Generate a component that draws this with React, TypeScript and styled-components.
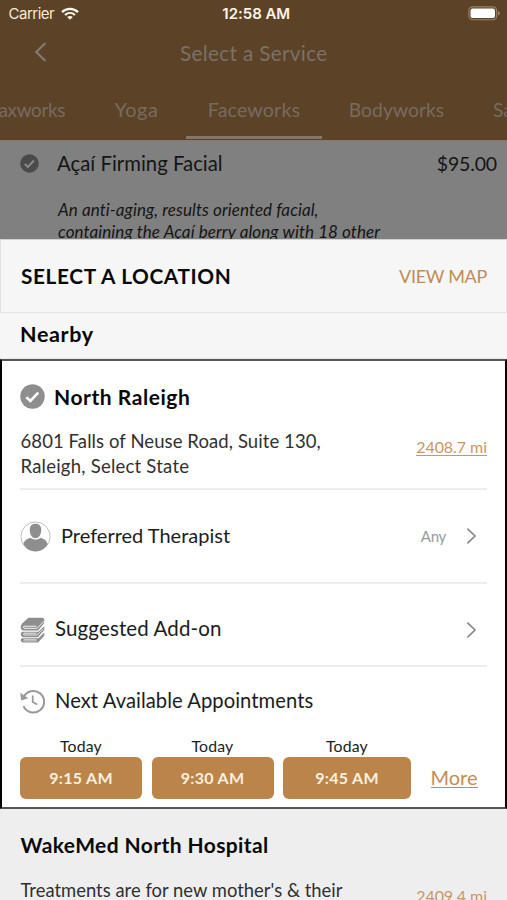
import React from 'react';
import styled, { createGlobalStyle } from 'styled-components';

const GlobalStyle = createGlobalStyle`
  * { box-sizing: border-box; }
  html, body { margin: 0; padding: 0; }
  body { width: 507px; height: 900px; overflow: hidden; background: #808080; }
`;

const gold = '#ba844a';
const gray = '#8e8e8e';

const Screen = styled.div`
  width: 507px;
  height: 900px;
  overflow: hidden;
  display: flex;
  flex-direction: column;
  font-family: Lato, "Open Sans", sans-serif;
  color: #1c1c1c;
  white-space: nowrap;
`;

const Label = styled.span<{ $size?: number; $track?: number; $bold?: boolean; $color?: string }>`
  font-size: ${p => p.$size ?? 20}px;
  font-weight: ${p => (p.$bold ? 700 : 400)};
  letter-spacing: ${p => p.$track ?? 0}px;
  color: ${p => p.$color ?? 'inherit'};
`;

const Header = styled.header`
  flex: none;
  height: 140px;
  background: #5c4226;
`;

const StatusBar = styled.div`
  height: 27px;
  padding: 0 7px 0 8.5px;
  display: grid;
  grid-template-columns: 1fr auto 1fr;
  align-items: center;
  font: 400 15px/27px Inter, sans-serif;
  color: #f6ead9;
`;

const Carrier = styled.div`
  display: flex;
  align-items: center;
  gap: 7px;
  letter-spacing: -0.5px;
`;

const Clock = styled.div`
  font-weight: 600;
  letter-spacing: -0.03px;
  padding-left: 4px;
  color: #fff6e8;
`;

const BatterySlot = styled.div`
  display: flex;
  justify-content: flex-end;
`;

const NavBar = styled.div`
  height: 50px;
  display: grid;
  grid-template-columns: 180px 1fr;
  align-items: center;
  line-height: 49px;
  color: #7b706a;
`;

const BackSlot = styled.div`
  display: flex;
  padding-left: 33px;
`;

const Tabs = styled.nav`
  height: 63px;
  display: flex;
  line-height: 65px;
  color: #776b60;
  overflow: hidden;
`;

const Tab = styled.div<{ $width: number; $active?: boolean; $align?: string }>`
  flex: none;
  width: ${p => p.$width}px;
  height: 62px;
  display: flex;
  padding: 0 ${p => (p.$align ? 22 : 0)}px;
  justify-content: ${p => p.$align ?? 'center'};
  border-bottom: 3px solid ${p => (p.$active ? '#80766d' : 'transparent')};
`;

const ServiceItem = styled.section`
  flex: none;
  height: 99px;
  overflow: hidden;
  background: #808080;
  border-top: 1px solid #86796c;
  color: #151515;
`;

const ServiceTitle = styled.div`
  height: 44px;
  padding: 0 10px 0 20px;
  display: grid;
  grid-template-columns: 37px 1fr auto;
  align-items: center;
  line-height: 43px;
`;

const Description = styled.p`
  margin: 14px 0 0 58px;
  font-size: 17px;
  font-style: italic;
  line-height: 21.5px;
  letter-spacing: 0.08px;
`;

const SheetHeader = styled.div`
  flex: none;
  height: 74px;
  padding: 0 19px 1px 20px;
  display: flex;
  align-items: center;
  justify-content: space-between;
  background: #f6f6f6;
  border: 1px solid #e2e2e2;
  border-top-color: #d0d0d0;
  color: #090909;
`;

const SectionTitle = styled.div`
  flex: none;
  height: 46px;
  padding-left: 20px;
  line-height: 43px;
  background: #f6f6f6;
  border-bottom: 1px solid #e8e8e8;
  color: #050505;
`;

const Card = styled.section`
  flex: none;
  height: 450px;
  padding: 0 18px;
  background: #fff;
  border: 2px solid #000;
  border-top-color: #555;
  border-bottom-color: #555;
`;

const Row = styled.div<{ $height: number; $top?: number; $bottom?: number; $rule?: boolean }>`
  height: ${p => p.$height}px;
  padding-top: ${p => p.$top ?? 0}px;
  display: flex;
  align-items: center;
  gap: 10px;
  border-bottom: ${p => (p.$rule ? '2px solid #ededed' : 'none')};

  > ${Label} {
    padding-bottom: 3px;
  }
`;

const CardTitle = styled.div`
  height: 68px;
  padding-top: 2px;
  display: flex;
  align-items: center;
  gap: 9px;
  color: #080808;
`;

const AddressRow = styled.div`
  height: 61px;
  display: flex;
  justify-content: space-between;
  border-bottom: 2px solid #ededed;
  line-height: 25px;
`;

const Address = styled.div`
  padding-left: 0.5px;
  display: flex;
  flex-direction: column;
  color: #303030;
`;

const Distance = styled.a`
  height: 19px;
  margin-top: 8px;
  font-size: 16px;
  line-height: 19px;
  letter-spacing: -0.05px;
  color: #cb9661;
  border-bottom: 1px solid #cb9661;
`;

const Trailing = styled.div`
  margin-left: auto;
  padding-right: 10px;
  display: flex;
  align-items: center;
  gap: 20px;
`;

const Slots = styled.div`
  display: grid;
  grid-template-columns: 122px 122px 128px 1fr;
  column-gap: 9.5px;
`;

const Slot = styled.div`
  display: flex;
  flex-direction: column;
  align-items: center;
`;

const Day = styled.span`
  height: 22px;
  font-size: 15.8px;
  line-height: 21px;
  letter-spacing: 0.18px;
`;

const TimeButton = styled.button`
  width: 100%;
  height: 42px;
  margin: 0;
  padding: 0 0 2px;
  border: 0;
  border-radius: 6px;
  background: ${gold};
  color: #fdf0df;
  font: 700 16px Lato, sans-serif;
  letter-spacing: 0.3px;
`;

const More = styled.a`
  align-self: start;
  justify-self: start;
  height: 23px;
  margin: 30px 0 0 10px;
  font-size: 20px;
  line-height: 24px;
  color: #c18d57;
  border-bottom: 1px solid #c18d57;
`;

const NextCard = styled.section`
  flex: none;
  height: 91px;
  padding: 0 20px 0 20.5px;
  overflow: hidden;
  background: #eee;
`;

const NextName = styled.div`
  height: 70px;
  line-height: 72px;
  color: #0a0a0a;
`;

const NextDetails = styled.div`
  display: flex;
  justify-content: space-between;
  line-height: 23px;
  color: #303030;
`;

const NextDistance = styled(Distance)`
  margin-top: 7px;
`;

const Wifi = () => (
  <svg width="18" height="14" viewBox="0 0 18 14" fill="none" stroke="#fff8ec">
    <path d="M1 5.1C5.4 0.8 12.6 0.8 17 5.1" strokeWidth="2.3" />
    <path d="M4 8C6.9 5.3 11.1 5.3 14 8" strokeWidth="2.2" />
    <path d="M9 12.8L6.2 10C7.8 8.7 10.2 8.7 11.8 10Z" fill="#fff8ec" stroke="none" />
  </svg>
);

const Battery = () => (
  <svg width="32" height="15" viewBox="0 0 32 15">
    <rect x="0.9" y="0.9" width="27.8" height="12.8" rx="3.8" fill="none" stroke="#9b8368" strokeWidth="1.1" />
    <rect x="2.5" y="2.5" width="24.5" height="9.6" rx="2.2" fill="#fff" />
    <path d="M30 5.2Q31.8 5.8 31.8 7.3T30 9.5Z" fill="#9b8368" />
  </svg>
);

const BackArrow = () => (
  <svg width="14" height="20" viewBox="0 0 14 20" fill="none" stroke="#817870" strokeWidth="2.3">
    <path d="M12.4 1L3.3 10L12.4 19" />
  </svg>
);

const Chevron = () => (
  <svg width="11" height="18" viewBox="0 0 11 18" fill="none" stroke="#858585" strokeWidth="1.6">
    <path d="M1.4 1.6L9 9L1.4 16.4" />
  </svg>
);

const CheckCircle = ({ size, fill, mark }: { size: number; fill: string; mark: string }) => (
  <svg width={size} height={size} viewBox="0 0 25 25">
    <circle cx="12.5" cy="12.5" r="12.2" fill={fill} />
    <path d="M6.3 13.2L10.4 17L18.3 8.6" fill="none" stroke={mark} strokeWidth="2.6" />
  </svg>
);

const Person = () => (
  <svg width="31" height="31" viewBox="0 0 31 31">
    <circle cx="15.5" cy="15.5" r="14.6" fill="#fff" stroke="#bdbdbd" strokeWidth="1" />
    <path d="M15.5 2.8C19.4 2.8 21.5 5.5 21.2 9.5C21 14 18.8 17.2 15.5 17.2S10 14 9.8 9.5C9.5 5.5 11.6 2.8 15.5 2.8Z" fill={gray} />
    <path d="M3.4 23.2C4.2 19.4 7 17.8 10.5 16.8C13 19.2 18 19.2 20.5 16.8C24 17.8 26.8 19.4 27.6 23.2C25 27.6 20.7 30.2 15.5 30.2S6 27.6 3.4 23.2Z" fill={gray} />
  </svg>
);

const Books = () => (
  <svg width="25" height="26" viewBox="0 0 25 26">
    <path d="M8.5 0.7H22.3Q25 1.1 24.2 4.4L24.4 6L18 13.6H3.8Q0.2 13 0.8 9.4Q1.2 6.8 3.4 5.2Z" fill={gray} />
    <path d="M24.3 9.2V12.9L17.8 20.3H4Q0.3 19.6 0.9 16.4Q1.2 15.1 2.3 14.8H18.4Z" fill={gray} />
    <path d="M24.3 15.5V18.8L18 25.5H3.6Q0.3 25 0.8 22.5Q1.2 21.2 2.3 21.2H18.4Z" fill={gray} />
    <g fill="none" stroke="#fff" strokeWidth="0.9">
      <path d="M16.5 9.2H4Q2.8 10.2 4 11.3H17.2L24.4 3.9" />
      <path d="M16.5 16.2H4Q2.9 17.1 4 18H17.2L23.4 11.8" strokeWidth="0.8" />
      <path d="M16.5 22.6H4Q3.2 23.2 4 23.9H16.8" strokeWidth="0.6" />
    </g>
  </svg>
);

const History = () => (
  <svg width="25" height="25" viewBox="0 0 25 25" fill="none">
    <path d="M3.6 8.1A10.8 10.8 0 1 1 3.5 17.2" stroke="#999" strokeWidth="2" />
    <path d="M0.2 3.7L1.2 11.5L8.2 9.2Z" fill="#999" />
    <path d="M12.7 6.5V13L17.2 15.6" stroke="#999" strokeWidth="1.7" />
  </svg>
);

const times = ['9:15 AM', '9:30 AM', '9:45 AM'];

export default function App() {
  return (
    <Screen>
      <GlobalStyle />
      <Header>
        <StatusBar>
          <Carrier>Carrier<Wifi /></Carrier>
          <Clock>12:58 AM</Clock>
          <BatterySlot><Battery /></BatterySlot>
        </StatusBar>
        <NavBar>
          <BackSlot><BackArrow /></BackSlot>
          <Label $size={20.8} $track={0.3}>Select a Service</Label>
        </NavBar>
        <Tabs>
          <Tab $width={87} $align="flex-end"><Label $size={19} $track={-0.4}>Waxworks</Label></Tab>
          <Tab $width={99}><Label $size={20} $track={0.5}>Yoga</Label></Tab>
          <Tab $width={136} $active><Label $size={19.7} $track={0.12}>Faceworks</Label></Tab>
          <Tab $width={149}><Label $size={19.3} $track={0.05}>Bodyworks</Label></Tab>
          <Tab $width={150} $align="flex-start"><Label $size={19.3}>Saltworks</Label></Tab>
        </Tabs>
      </Header>

      <ServiceItem>
        <ServiceTitle>
          <CheckCircle size={19} fill="#4a4a4a" mark="#8b8b8b" />
          <Label $size={20.3} $track={0.03}>Açaí Firming Facial</Label>
          <Label $size={19.5} $track={-0.15}>$95.00</Label>
        </ServiceTitle>
        <Description>
          An anti-aging, results oriented facial,<br />
          containing the Açaí berry along with 18 other
        </Description>
      </ServiceItem>

      <SheetHeader>
        <Label $bold $size={20.8} $track={0.62}>SELECT A LOCATION</Label>
        <Label $size={18} $track={-0.3} $color="#c18c57">VIEW MAP</Label>
      </SheetHeader>
      <SectionTitle><Label $bold $size={21.5} $track={0.65}>Nearby</Label></SectionTitle>

      <Card>
        <CardTitle>
          <CheckCircle size={25} fill={gray} mark="#fff" />
          <Label $bold $size={21} $track={0.55}>North Raleigh</Label>
        </CardTitle>
        <AddressRow>
          <Address>
            <Label $size={18.5} $track={0.09}>6801 Falls of Neuse Road, Suite 130,</Label>
            <Label $size={18.5} $track={0.23}>Raleigh, Select State</Label>
          </Address>
          <Distance>2408.7 mi</Distance>
        </AddressRow>
        <Row $height={94} $rule>
          <Person />
          <Label>Preferred Therapist</Label>
          <Trailing>
            <Label $size={15} $track={-0.3} $color="#999">Any</Label>
            <Chevron />
          </Trailing>
        </Row>
        <Row $height={83} $top={10} $rule>
          <Books />
          <Label $size={20.5} $track={0.12}>Suggested Add-on</Label>
          <Trailing><Chevron /></Trailing>
        </Row>
        <Row $height={68}>
          <History />
          <Label $size={20.2} $track={0.06}>Next Available Appointments</Label>
        </Row>
        <Slots>
          {times.map(time => (
            <Slot key={time}>
              <Day>Today</Day>
              <TimeButton>{time}</TimeButton>
            </Slot>
          ))}
          <More>More</More>
        </Slots>
      </Card>

      <NextCard>
        <NextName><Label $bold $size={21} $track={0.4}>WakeMed North Hospital</Label></NextName>
        <NextDetails>
          <Label $size={18.4} $track={0.02}>Treatments are for new mother's &amp; their</Label>
          <NextDistance>2409.4 mi</NextDistance>
        </NextDetails>
      </NextCard>
    </Screen>
  );
}
